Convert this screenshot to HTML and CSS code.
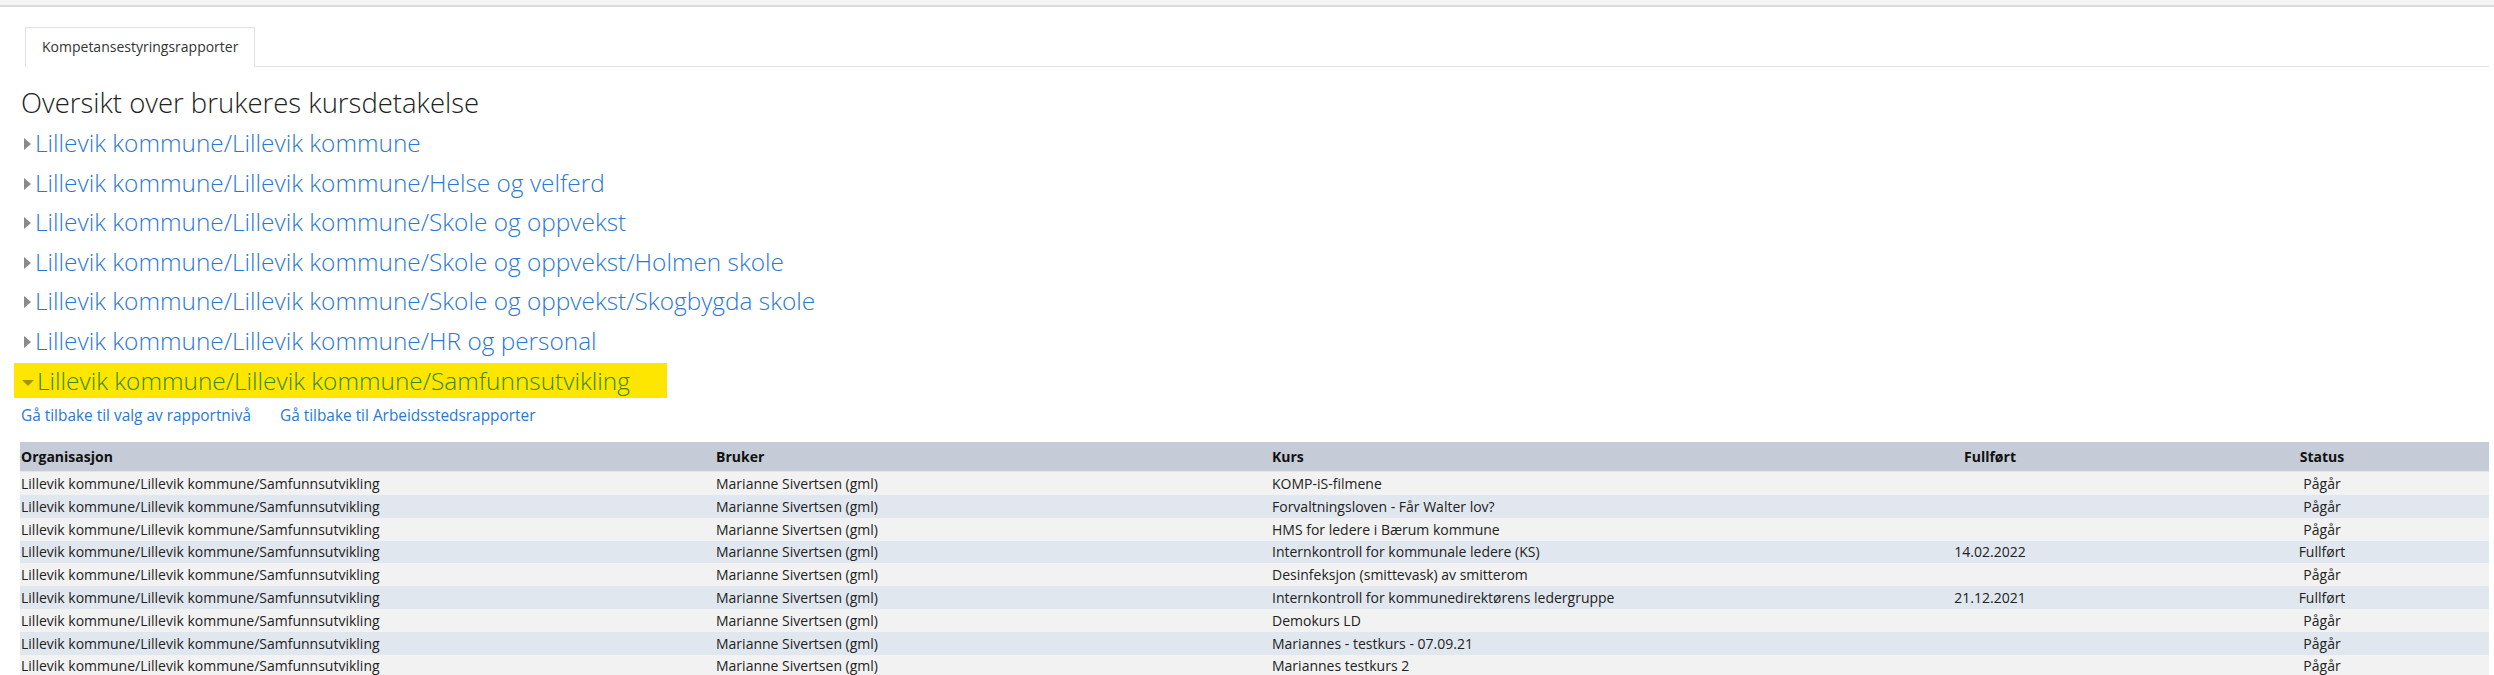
FILE: index.html
```html
<!DOCTYPE html>
<html lang="no">
<head>
    <meta charset="UTF-8">
    <meta name="viewport" content="width=device-width, initial-scale=1.0">
    <title>Kompetansestyringsrapporter</title>
    <link rel="stylesheet" href="styles.css">
</head>
<body>
    <div class="topbar"></div>

    <div class="tabs">
        <div class="tab">Kompetansestyringsrapporter</div>
    </div>

    <div class="content">
        <h1 class="title">Oversikt over brukeres kursdetakelse</h1>

        <div class="tree">
            <a class="node" href="#"><span class="arrow"></span>Lillevik kommune/Lillevik kommune</a>
            <a class="node" href="#"><span class="arrow"></span>Lillevik kommune/Lillevik kommune/Helse og velferd</a>
            <a class="node" href="#"><span class="arrow"></span>Lillevik kommune/Lillevik kommune/Skole og oppvekst</a>
            <a class="node" href="#"><span class="arrow"></span>Lillevik kommune/Lillevik kommune/Skole og oppvekst/Holmen skole</a>
            <a class="node" href="#"><span class="arrow"></span>Lillevik kommune/Lillevik kommune/Skole og oppvekst/Skogbygda skole</a>
            <a class="node" href="#"><span class="arrow"></span>Lillevik kommune/Lillevik kommune/HR og personal</a>
            <a class="node open" href="#"><span class="arrow"></span>Lillevik kommune/Lillevik kommune/Samfunnsutvikling</a>
        </div>

        <div class="back-links">
            <a href="#">Gå tilbake til valg av rapportnivå</a>
            <a href="#">Gå tilbake til Arbeidsstedsrapporter</a>
        </div>

        <table class="report">
            <thead>
                <tr>
                    <th class="col-org">Organisasjon</th>
                    <th class="col-user">Bruker</th>
                    <th class="col-course">Kurs</th>
                    <th class="col-done center">Fullført</th>
                    <th class="col-status center">Status</th>
                </tr>
            </thead>
            <tbody>
                <tr>
                    <td>Lillevik kommune/Lillevik kommune/Samfunnsutvikling</td>
                    <td>Marianne Sivertsen (gml)</td>
                    <td>KOMP-iS-filmene</td>
                    <td class="center"></td>
                    <td class="center">Pågår</td>
                </tr>
                <tr>
                    <td>Lillevik kommune/Lillevik kommune/Samfunnsutvikling</td>
                    <td>Marianne Sivertsen (gml)</td>
                    <td>Forvaltningsloven - Får Walter lov?</td>
                    <td class="center"></td>
                    <td class="center">Pågår</td>
                </tr>
                <tr>
                    <td>Lillevik kommune/Lillevik kommune/Samfunnsutvikling</td>
                    <td>Marianne Sivertsen (gml)</td>
                    <td>HMS for ledere i Bærum kommune</td>
                    <td class="center"></td>
                    <td class="center">Pågår</td>
                </tr>
                <tr>
                    <td>Lillevik kommune/Lillevik kommune/Samfunnsutvikling</td>
                    <td>Marianne Sivertsen (gml)</td>
                    <td>Internkontroll for kommunale ledere (KS)</td>
                    <td class="center">14.02.2022</td>
                    <td class="center">Fullført</td>
                </tr>
                <tr>
                    <td>Lillevik kommune/Lillevik kommune/Samfunnsutvikling</td>
                    <td>Marianne Sivertsen (gml)</td>
                    <td>Desinfeksjon (smittevask) av smitterom</td>
                    <td class="center"></td>
                    <td class="center">Pågår</td>
                </tr>
                <tr>
                    <td>Lillevik kommune/Lillevik kommune/Samfunnsutvikling</td>
                    <td>Marianne Sivertsen (gml)</td>
                    <td>Internkontroll for kommunedirektørens ledergruppe</td>
                    <td class="center">21.12.2021</td>
                    <td class="center">Fullført</td>
                </tr>
                <tr>
                    <td>Lillevik kommune/Lillevik kommune/Samfunnsutvikling</td>
                    <td>Marianne Sivertsen (gml)</td>
                    <td>Demokurs LD</td>
                    <td class="center"></td>
                    <td class="center">Pågår</td>
                </tr>
                <tr>
                    <td>Lillevik kommune/Lillevik kommune/Samfunnsutvikling</td>
                    <td>Marianne Sivertsen (gml)</td>
                    <td>Mariannes - testkurs - 07.09.21</td>
                    <td class="center"></td>
                    <td class="center">Pågår</td>
                </tr>
                <tr>
                    <td>Lillevik kommune/Lillevik kommune/Samfunnsutvikling</td>
                    <td>Marianne Sivertsen (gml)</td>
                    <td>Mariannes testkurs 2</td>
                    <td class="center"></td>
                    <td class="center">Pågår</td>
                </tr>
            </tbody>
        </table>
    </div>
</body>
</html>
```

FILE: styles.css
```css
body {
    font-family: "Open Sans", "Noto Sans", Arial, sans-serif;
    margin: 0;
    padding: 0;
    background-color: #fff;
    color: #222;
}

a {
    text-decoration: none;
}

.topbar {
    height: 5px;
    background-color: #f3f3f3;
    border-bottom: 2px solid #dcdcdc;
}

.tabs {
    display: flex;
    margin: 20px 5px 0 25px;
    border-bottom: 1px solid #e0e0e0;
}

.tab {
    height: 38px;
    line-height: 38px;
    padding: 0 16px;
    margin-bottom: -1px;
    border: 1px solid #e0e0e0;
    border-bottom: 1px solid #fff;
    background-color: #fff;
    font-size: 14px;
    color: #333;
}

.content {
    padding: 0 5px 0 20px;
}

.title {
    margin: 18px 0 0 1px;
    font-size: 27.5px;
    font-weight: 300;
    line-height: 35px;
    color: #222;
}

.tree {
    display: flex;
    flex-direction: column;
    align-items: flex-start;
    margin: 5px 0 0 -6px;
}

.node {
    display: flex;
    align-items: center;
    height: 35px;
    margin-bottom: 4.6px;
    padding: 0 0 0 10px;
    font-size: 24.4px;
    font-weight: 300;
    color: #2a78d4;
}

.arrow {
    width: 0;
    height: 0;
    margin: 3px 4px 0 0;
    border-left: 7px solid #8a8a8a;
    border-top: 6px solid transparent;
    border-bottom: 6px solid transparent;
}

.node.open {
    padding-right: 37px;
    padding-left: 8px;
    background-color: #ffe600;
    color: #358a18;
}

.node.open .arrow {
    margin: 5px 3px 0 0;
    border-top: 6px solid #a09800;
    border-left: 6px solid transparent;
    border-right: 6px solid transparent;
    border-bottom: none;
}

.back-links {
    display: flex;
    gap: 29px;
    margin: 4px 0 0 1px;
    line-height: 20px;
    font-size: 15.4px;
}

.back-links a {
    color: #2a78d4;
}

.report {
    width: 100%;
    margin-top: 16px;
    border-collapse: collapse;
    font-size: 14px;
}

.report th {
    height: 29px;
    padding: 0 1px;
    text-align: left;
    font-weight: bold;
    color: #111;
    background-color: #c5cbd7;
    border-bottom: 1px solid #e3e6eb;
}

.report td {
    height: 22.8px;
    padding: 0 1px;
    white-space: nowrap;
}

.report tbody tr:nth-child(odd) {
    background-color: #f2f2f2;
}

.report tbody tr:nth-child(even) {
    background-color: #e1e7ef;
}

.report .center {
    text-align: center;
}

.col-org {
    width: 693px;
}

.col-user {
    width: 554px;
}

.col-course {
    width: 552px;
}

.col-done {
    width: 328px;
}
```
